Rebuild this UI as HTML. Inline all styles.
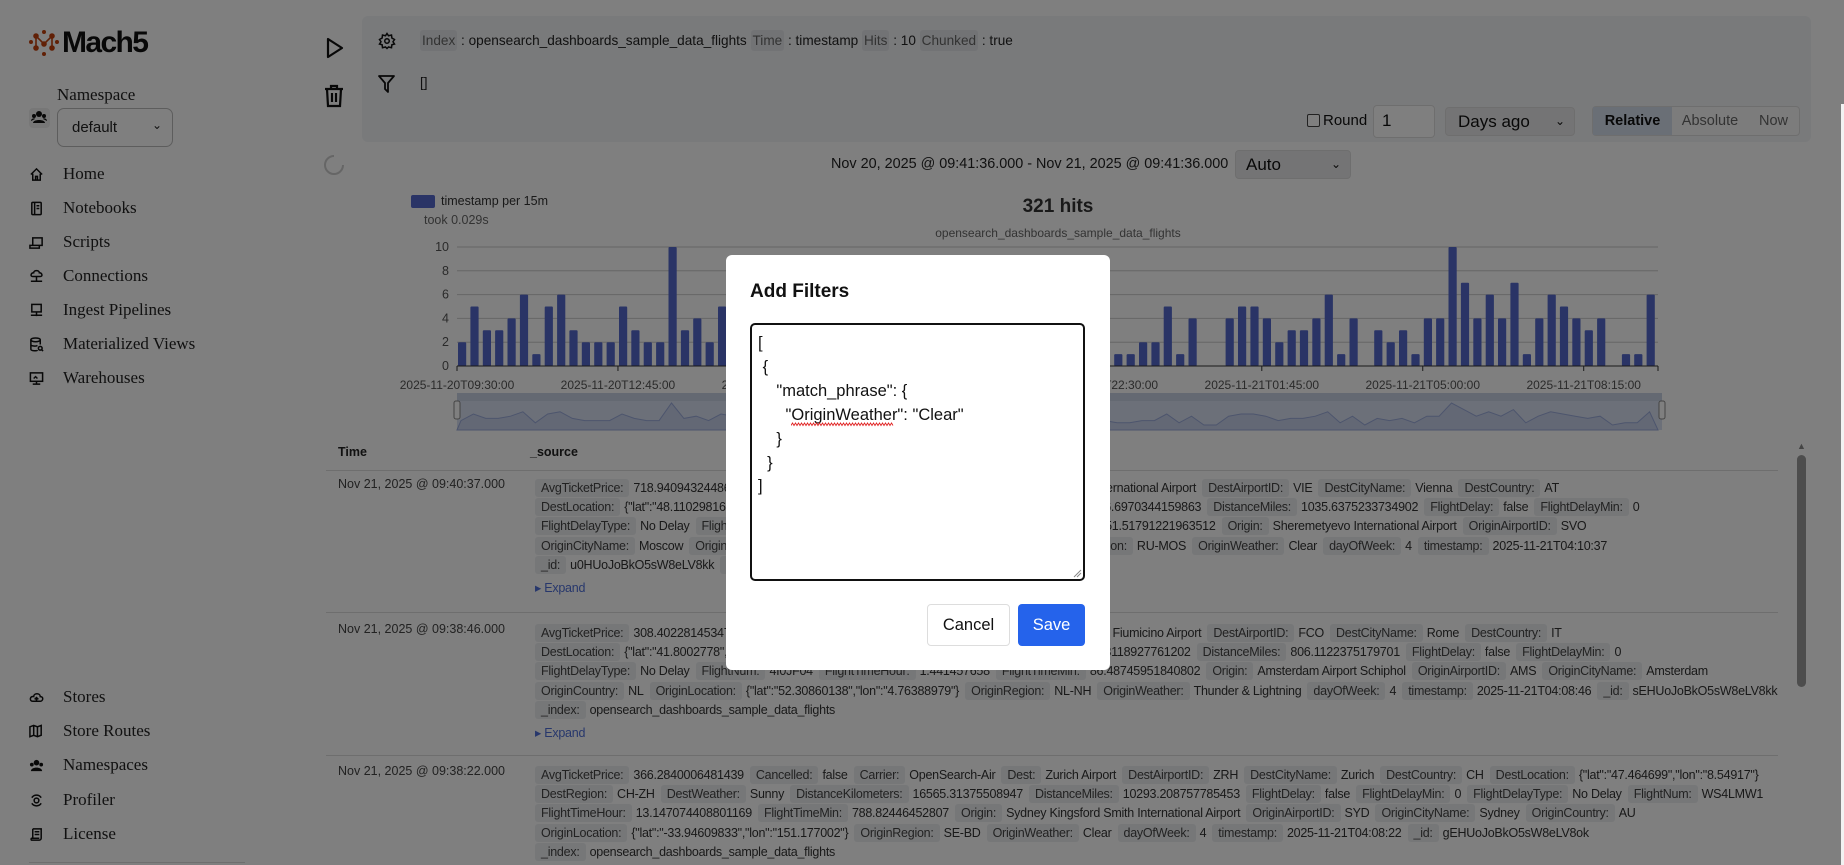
<!DOCTYPE html>
<html><head><meta charset="utf-8">
<style>
*{box-sizing:border-box;margin:0;padding:0}
html,body{width:1844px;height:865px;overflow:hidden;background:#fff;font-family:"Liberation Sans",sans-serif;color:#111}
.abs{position:absolute}
.nav{position:absolute;left:29px;font-family:"Liberation Serif",serif;font-size:17px;color:#222;display:flex;align-items:center;height:24px}
.nav svg{width:15px;height:15px;margin-right:19px;stroke:#111;fill:none;stroke-width:1.6}
.q{font-size:13.6px;color:#222;white-space:nowrap}
.q .l{background:#e5e7eb;color:#666;padding:3px 2px;border-radius:3px}
.row{position:absolute;left:535px;font-size:12.5px;letter-spacing:-0.25px;color:#333;white-space:nowrap}
.row div{height:19.2px;line-height:19.2px}
.k{background:#eceef1;color:#444;padding:2px 6px;border-radius:3px;margin-right:4px}
.v{margin-right:6px}
.time{position:absolute;left:338px;font-size:12.5px;color:#444}
.exp{font-size:12.5px;color:#4f6fd8;margin-top:5px;height:auto!important;line-height:16px!important}
.sep{position:absolute;left:326px;width:1452px;height:1px;background:#ddd}
</style></head><body>

<!-- Sidebar -->
<div class="abs" style="left:29px;top:26px;display:flex;align-items:center">
<svg width="30" height="26" viewBox="0 0 30 26"><g fill="#c2410c" stroke="#c2410c" stroke-width="1.6"><circle cx="2" cy="12" r="1.2"/><circle cx="28" cy="12" r="1.2"/><circle cx="15" cy="2" r="1.2"/><circle cx="15" cy="24" r="1.2"/><path d="M7 18 V6 L15 14 L23 6 V18" fill="none"/><circle cx="7" cy="6" r="2"/><circle cx="23" cy="6" r="2"/><circle cx="15" cy="14" r="2"/><circle cx="7" cy="18" r="2"/><circle cx="23" cy="18" r="2"/></g></svg>
<span style="font-weight:bold;font-size:30px;letter-spacing:-1.6px;color:#111;margin-left:3px">Mach5</span></div>
<div class="abs" style="left:29px;top:108px;width:21px;height:20px;background:#eee;border-radius:4px"></div>
<svg class="abs" style="left:31px;top:110px" width="16" height="14" viewBox="0 0 16 14"><g fill="#111"><circle cx="8" cy="4" r="3"/><circle cx="3" cy="6" r="2"/><circle cx="13" cy="6" r="2"/><path d="M2 13c0-4 12-4 12 0z"/><path d="M0 11c0-3 4-3 4-2zM16 11c0-3-4-3-4-2z"/></g></svg>
<div class="abs" style="left:57px;top:85px;font-family:'Liberation Serif',serif;font-size:17px;color:#222">Namespace</div>
<div class="abs" style="left:57px;top:108px;width:116px;height:39px;border:1px solid #bbb;border-radius:7px;font-size:15px;padding:10px 14px;color:#222">default<span style="position:absolute;right:10px;top:9px;font-size:12px">&#8964;</span></div>

<div class="nav" style="top:162px"><svg viewBox="0 0 16 16"><path d="M2 8 L8 2 L14 8 M4 7 V14 H12 V7 M7 14 V10 H9 V14"/></svg>Home</div>
<div class="nav" style="top:196px"><svg viewBox="0 0 16 16"><rect x="3" y="1.5" width="10" height="13" rx="1"/><path d="M6 1.5 V14.5 M8 5 H11 M8 8 H11"/></svg>Notebooks</div>
<div class="nav" style="top:230px"><svg viewBox="0 0 16 16"><path d="M4 3 H14 V11 H4 Z M1 11 H11 V14 H1 Z"/></svg>Scripts</div>
<div class="nav" style="top:264px"><svg viewBox="0 0 16 16"><path d="M4 8 C1 8 2 4 5 4 C5 1 11 1 11 4 C14 4 15 8 12 8 Z M8 8 V13 M2 13 H14"/></svg>Connections</div>
<div class="nav" style="top:298px"><svg viewBox="0 0 16 16"><rect x="3" y="1.5" width="10" height="8"/><path d="M8 9.5 V14 M2 13 H14"/></svg>Ingest Pipelines</div>
<div class="nav" style="top:332px"><svg viewBox="0 0 16 16"><ellipse cx="7" cy="3" rx="5" ry="2"/><path d="M2 3 V13 C2 15 9 15 9 14 M12 3 V8 M2 8 C2 10 8 10 9 9"/><circle cx="12" cy="12" r="2"/><path d="M13.5 13.5 L15 15"/></svg>Materialized Views</div>
<div class="nav" style="top:366px"><svg viewBox="0 0 16 16"><rect x="1.5" y="2" width="13" height="9"/><path d="M8 11 V14 M4 14 H12 M5 8 L7 6 L9 8"/></svg>Warehouses</div>

<div class="nav" style="top:685px"><svg viewBox="0 0 16 16"><path d="M4 12 C0 12 1 6 5 7 C5 3 12 3 12 7 C16 7 15 12 12 12 Z M8 12 V8 M6 10 L8 8 L10 10"/></svg>Stores</div>
<div class="nav" style="top:719px"><svg viewBox="0 0 16 16"><path d="M1 3 L5 1.5 L9 3 L13 1.5 V12 L9 13.5 L5 12 L1 13.5 Z M5 1.5 V12 M9 3 V13.5"/></svg>Store Routes</div>
<div class="nav" style="top:753px"><svg viewBox="0 0 16 16" style="fill:#111;stroke:none"><circle cx="8" cy="5" r="3"/><circle cx="3" cy="7" r="2"/><circle cx="13" cy="7" r="2"/><path d="M2 14c0-5 12-5 12 0z"/></svg>Namespaces</div>
<div class="nav" style="top:788px"><svg viewBox="0 0 16 16"><path d="M3 5 A6 6 0 0 1 13 5 M13 11 A6 6 0 0 1 3 11"/><circle cx="8" cy="8" r="2.5"/></svg>Profiler</div>
<div class="nav" style="top:822px"><svg viewBox="0 0 16 16"><path d="M4 2 H13 V12 C13 14 11 14 11 14 H3 C2 14 2 12 3 12 H11 M4 2 V12 M6 5 H11 M6 8 H11"/></svg>License</div>
<div class="abs" style="left:29px;top:862px;width:216px;height:1px;background:#ddd"></div>

<!-- Run / trash -->
<svg class="abs" style="left:325px;top:37px" width="20" height="22" viewBox="0 0 20 22"><path d="M3 2 L17 11 L3 20 Z" fill="none" stroke="#111" stroke-width="2.2" stroke-linejoin="round"/></svg>
<svg class="abs" style="left:324px;top:84px" width="20" height="24" viewBox="0 0 20 24"><g fill="none" stroke="#111" stroke-width="2.2"><path d="M1 5 H19 M7 5 V2 H13 V5 M3 5 L4 22 H16 L17 5 M8 9 V18 M12 9 V18"/></g></svg>
<svg class="abs" style="left:322px;top:153px" width="24" height="24" viewBox="0 0 24 24"><path d="M12 3 A9 9 0 1 0 21 12" fill="none" stroke="#ccc" stroke-width="2"/></svg>

<!-- Query panel -->
<div class="abs" style="left:362px;top:16px;width:1449px;height:126px;background:#f3f4f6;border-radius:6px"></div>
<svg class="abs" style="left:378px;top:32px" width="18" height="18" viewBox="0 0 24 24"><g fill="none" stroke="#111" stroke-width="2"><circle cx="12" cy="12" r="3"/><path d="M12 2 L14 5 L18 4 L18.5 8 L22 10 L20 13 L22 16 L18.5 17 L18 21 L14 20 L12 22 L10 20 L6 21 L5.5 17 L2 16 L4 13 L2 10 L5.5 8 L6 4 L10 5 Z"/></g></svg>
<svg class="abs" style="left:378px;top:75px" width="17" height="18" viewBox="0 0 17 18"><path d="M1 1 H16 L10 8 V17 L7 14 V8 Z" fill="none" stroke="#111" stroke-width="1.8" stroke-linejoin="round"/></svg>
<div class="abs q" style="left:420px;top:33px"><span class="l">Index</span> : opensearch_dashboards_sample_data_flights <span class="l">Time</span> : timestamp <span class="l">Hits</span> : 10 <span class="l">Chunked</span> : true</div>
<div class="abs q" style="left:420px;top:75px">[]</div>

<div class="abs" style="left:1307px;top:114px;width:13px;height:13px;border:1px solid #444;border-radius:2px;background:#fff"></div>
<div class="abs" style="left:1323px;top:112px;font-size:15px;color:#111">Round</div>
<div class="abs" style="left:1373px;top:105px;width:62px;height:33px;border:1px solid #ddd;border-radius:4px;background:#fff;font-size:17px;padding:5px 8px">1</div>
<div class="abs" style="left:1445px;top:107px;width:130px;height:29px;border:1px solid #ddd;border-radius:4px;background:#e9e9ea;font-size:17px;padding:4px 12px">Days ago<span style="position:absolute;right:9px;top:6px;font-size:12px">&#8964;</span></div>
<div class="abs" style="left:1592px;top:106px;width:208px;height:30px;border:1px solid #ddd;border-radius:4px;background:#f8f8f8;display:flex;font-size:14.5px;align-items:center">
<div style="background:#d5deec;height:100%;width:79px;display:flex;align-items:center;justify-content:center;font-weight:bold">Relative</div>
<div style="width:76px;text-align:center;color:#666">Absolute</div><div style="width:51px;text-align:center;color:#666">Now</div></div>

<div class="abs" style="left:831px;top:156px;font-size:14.4px;color:#222">Nov 20, 2025 @ 09:41:36.000 - Nov 21, 2025 @ 09:41:36.000</div>
<div class="abs" style="left:1235px;top:150px;width:116px;height:29px;border:1px solid #ddd;border-radius:4px;background:#e9e9ea;font-size:17px;padding:4px 10px">Auto<span style="position:absolute;right:9px;top:6px;font-size:12px">&#8964;</span></div>

<!-- Chart -->
<div class="abs" style="left:411px;top:195px;width:24px;height:13px;background:#5468cc;border-radius:2px"></div>
<div class="abs" style="left:441px;top:194px;font-size:12.5px;color:#333">timestamp per 15m</div>
<div class="abs" style="left:424px;top:213px;font-size:12.5px;color:#666">took 0.029s</div>
<div class="abs" style="left:958px;top:196px;width:200px;text-align:center;font-size:19px;font-weight:bold;color:#333">321 hits</div>
<div class="abs" style="left:858px;top:226px;width:400px;text-align:center;font-size:12px;color:#666">opensearch_dashboards_sample_data_flights</div>
<svg class="abs" id="ch" style="left:0;top:0" width="1844" height="440"></svg>

<!-- Table -->
<div class="abs" style="left:338px;top:445px;font-size:12.5px;font-weight:bold;color:#222">Time</div>
<div class="abs" style="left:530px;top:445px;font-size:12.5px;font-weight:bold;color:#222">_source</div>
<div class="sep" style="top:470px"></div>
<div class="time" style="top:477px">Nov 21, 2025 @ 09:40:37.000</div>
<div class="row" style="top:479px">
<div><span class="k">AvgTicketPrice:</span><span class="v">718.9409432448638</span><span class="k">Cancelled:</span><span class="v">false</span><span class="k">Carrier:</span><span class="v">Logstash Airways</span><span class="k">Dest:</span><span class="v">Vienna International Airport</span><span class="k">DestAirportID:</span><span class="v">VIE</span><span class="k">DestCityName:</span><span class="v">Vienna</span><span class="k">DestCountry:</span><span class="v">AT</span></div>
<div><span class="k">DestLocation:</span><span class="v">{"lat":"48.11029816","lon":"16.56970024"}</span><span class="k">DestRegion:</span><span class="v">AT-9</span><span class="k">DistanceKilometers:</span><span class="v">1666.6970344159863</span><span class="k">DistanceMiles:</span><span class="v">1035.6375233734902</span><span class="k">FlightDelay:</span><span class="v">false</span><span class="k">FlightDelayMin:</span><span class="v">0</span></div>
<div><span class="k">FlightDelayType:</span><span class="v">No Delay</span><span class="k">FlightNum:</span><span class="v">9HY9SWR</span><span class="k">FlightTimeHour:</span><span class="v">2.52529870</span><span class="k">FlightTimeMin:</span><span class="v">151.51791221963512</span><span class="k">Origin:</span><span class="v">Sheremetyevo International Airport</span><span class="k">OriginAirportID:</span><span class="v">SVO</span></div>
<div><span class="k">OriginCityName:</span><span class="v">Moscow</span><span class="k">OriginCountry:</span><span class="v">RU</span><span class="k">OriginLocation:</span><span class="v">{"lat":"55.97","lon":"37.41"}</span><span class="k">OriginRegion:</span><span class="v">RU-MOS</span><span class="k">OriginWeather:</span><span class="v">Clear</span><span class="k">dayOfWeek:</span><span class="v">4</span><span class="k">timestamp:</span><span class="v">2025-11-21T04:10:37</span></div>
<div><span class="k">_id:</span><span class="v">u0HUoJoBkO5sW8eLV8kk</span><span class="k">_index:</span><span class="v">opensearch_dashboards_sample_data_flights</span></div>
<div class="exp">&#9656; Expand</div>
</div>
<div class="sep" style="top:612px"></div>
<div class="time" style="top:622px">Nov 21, 2025 @ 09:38:46.000</div>
<div class="row" style="top:624px">
<div><span class="k">AvgTicketPrice:</span><span class="v">308.4022814534701</span><span class="k">Cancelled:</span><span class="v">false</span><span class="k">Carrier:</span><span class="v">JetBeats</span><span class="k">Dest:</span><span class="v">Leonardo da Vinci - Fiumicino Airport</span><span class="k">DestAirportID:</span><span class="v">FCO</span><span class="k">DestCityName:</span><span class="v">Rome</span><span class="k">DestCountry:</span><span class="v">IT</span></div>
<div><span class="k">DestLocation:</span><span class="v">{"lat":"41.8002778","lon":"12.2388889"}</span><span class="k">DestRegion:</span><span class="v">IT-62</span><span class="k">DistanceKilometers:</span><span class="v">1297.3118927761202</span><span class="k">DistanceMiles:</span><span class="v">806.1122375179701</span><span class="k">FlightDelay:</span><span class="v">false</span><span class="k">FlightDelayMin:</span><span class="v">0</span></div>
<div><span class="k">FlightDelayType:</span><span class="v">No Delay</span><span class="k">FlightNum:</span><span class="v">4I0JF04</span><span class="k">FlightTimeHour:</span><span class="v">1.441457658</span><span class="k">FlightTimeMin:</span><span class="v">86.48745951840802</span><span class="k">Origin:</span><span class="v">Amsterdam Airport Schiphol</span><span class="k">OriginAirportID:</span><span class="v">AMS</span><span class="k">OriginCityName:</span><span class="v">Amsterdam</span></div>
<div><span class="k">OriginCountry:</span><span class="v">NL</span><span class="k">OriginLocation:</span><span class="v">{"lat":"52.30860138","lon":"4.76388979"}</span><span class="k">OriginRegion:</span><span class="v">NL-NH</span><span class="k">OriginWeather:</span><span class="v">Thunder &amp; Lightning</span><span class="k">dayOfWeek:</span><span class="v">4</span><span class="k">timestamp:</span><span class="v">2025-11-21T04:08:46</span><span class="k">_id:</span><span class="v">sEHUoJoBkO5sW8eLV8kk</span></div>
<div><span class="k">_index:</span><span class="v">opensearch_dashboards_sample_data_flights</span></div>
<div class="exp">&#9656; Expand</div>
</div>
<div class="sep" style="top:755px"></div>
<div class="time" style="top:764px">Nov 21, 2025 @ 09:38:22.000</div>
<div class="row" style="top:766px">
<div><span class="k">AvgTicketPrice:</span><span class="v">366.2840006481439</span><span class="k">Cancelled:</span><span class="v">false</span><span class="k">Carrier:</span><span class="v">OpenSearch-Air</span><span class="k">Dest:</span><span class="v">Zurich Airport</span><span class="k">DestAirportID:</span><span class="v">ZRH</span><span class="k">DestCityName:</span><span class="v">Zurich</span><span class="k">DestCountry:</span><span class="v">CH</span><span class="k">DestLocation:</span><span class="v">{"lat":"47.464699","lon":"8.54917"}</span></div>
<div><span class="k">DestRegion:</span><span class="v">CH-ZH</span><span class="k">DestWeather:</span><span class="v">Sunny</span><span class="k">DistanceKilometers:</span><span class="v">16565.31375508947</span><span class="k">DistanceMiles:</span><span class="v">10293.208757785453</span><span class="k">FlightDelay:</span><span class="v">false</span><span class="k">FlightDelayMin:</span><span class="v">0</span><span class="k">FlightDelayType:</span><span class="v">No Delay</span><span class="k">FlightNum:</span><span class="v">WS4LMW1</span></div>
<div><span class="k">FlightTimeHour:</span><span class="v">13.147074408801169</span><span class="k">FlightTimeMin:</span><span class="v">788.82446452807</span><span class="k">Origin:</span><span class="v">Sydney Kingsford Smith International Airport</span><span class="k">OriginAirportID:</span><span class="v">SYD</span><span class="k">OriginCityName:</span><span class="v">Sydney</span><span class="k">OriginCountry:</span><span class="v">AU</span></div>
<div><span class="k">OriginLocation:</span><span class="v">{"lat":"-33.94609833","lon":"151.177002"}</span><span class="k">OriginRegion:</span><span class="v">SE-BD</span><span class="k">OriginWeather:</span><span class="v">Clear</span><span class="k">dayOfWeek:</span><span class="v">4</span><span class="k">timestamp:</span><span class="v">2025-11-21T04:08:22</span><span class="k">_id:</span><span class="v">gEHUoJoBkO5sW8eLV8ok</span></div>
<div><span class="k">_index:</span><span class="v">opensearch_dashboards_sample_data_flights</span></div>
</div>
<div class="abs" style="left:1797px;top:441px;font-size:9px;color:#888">&#9650;</div>
<div class="abs" style="left:1797px;top:455px;width:9px;height:232px;background:#9a9a9a;border-radius:5px"></div>

<!-- overlay -->
<div class="abs" style="left:0;top:0;width:1844px;height:865px;background:rgba(0,0,0,0.5)"></div>
<div class="abs" style="left:1841px;top:104px;width:3px;height:761px;background:#f2f2f2"></div>

<!-- Modal -->
<div class="abs" style="left:726px;top:255px;width:384px;height:415px;background:#fff;border-radius:6px"></div>
<div class="abs" style="left:750px;top:281px;font-size:19px;font-weight:bold;color:#111">Add Filters</div>
<div class="abs" style="left:750px;top:323px;width:335px;height:258px;border:2px solid #111;border-radius:5px"></div>
<pre class="abs" style="left:758px;top:332px;font-family:'Liberation Sans',sans-serif;font-size:16.5px;line-height:23.9px;color:#111">[
 {
    "match_phrase": {
      "OriginWeather": "Clear"
    }
  }
]</pre>
<svg class="abs" style="left:791px;top:422px" width="104" height="5" viewBox="0 0 104 5"><path d="M0 3.5 L1.5 1 L3 3.5 L4.5 1 L6 3.5 L7.5 1 L9 3.5 L10.5 1 L12 3.5 L13.5 1 L15 3.5 L16.5 1 L18 3.5 L19.5 1 L21 3.5 L22.5 1 L24 3.5 L25.5 1 L27 3.5 L28.5 1 L30 3.5 L31.5 1 L33 3.5 L34.5 1 L36 3.5 L37.5 1 L39 3.5 L40.5 1 L42 3.5 L43.5 1 L45 3.5 L46.5 1 L48 3.5 L49.5 1 L51 3.5 L52.5 1 L54 3.5 L55.5 1 L57 3.5 L58.5 1 L60 3.5 L61.5 1 L63 3.5 L64.5 1 L66 3.5 L67.5 1 L69 3.5 L70.5 1 L72 3.5 L73.5 1 L75 3.5 L76.5 1 L78 3.5 L79.5 1 L81 3.5 L82.5 1 L84 3.5 L85.5 1 L87 3.5 L88.5 1 L90 3.5 L91.5 1 L93 3.5 L94.5 1 L96 3.5 L97.5 1 L99 3.5 L100.5 1 L102 3.5" fill="none" stroke="#e02020" stroke-width="0.9"/></svg>
<svg class="abs" style="left:1072px;top:568px" width="10" height="10"><path d="M2 9 L9 2 M5 9 L9 5" stroke="#888" stroke-width="1"/></svg>
<div class="abs" style="left:927px;top:604px;width:83px;height:42px;border:1px solid #ddd;border-radius:4px;font-size:16.5px;display:flex;align-items:center;justify-content:center;color:#111">Cancel</div>
<div class="abs" style="left:1018px;top:604px;width:67px;height:42px;background:#2563eb;border-radius:4px;font-size:16.5px;display:flex;align-items:center;justify-content:center;color:#fff">Save</div>

<script>
var v=[2,5,3,3,4,6,1,5,6,3,2,2,2,5,3,2,2,10,3,4,2,5,
4,3,2,6,3,5,2,4,3,3,2,5,4,3,6,2,3,4,3,2,5,3,4,2,3,1,2,3,4,2,
2,1,1,2,2,5,1,4,0,0,4,5,5,4,2,3,3,4,6,1,4,0,3,2,3,1,4,4,10,7,4,6,4,7,1,4,6,5,4,3,4,0,1,1,6];
var x0=457,x1=1658,y0=366,yu=11.9,bw=(x1-x0)/97,s='';
for(var g=0;g<=10;g+=2){var y=y0-g*yu;s+='<line x1="'+x0+'" x2="'+x1+'" y1="'+y+'" y2="'+y+'" stroke="#ccc"/>';
s+='<text x="'+(x0-8)+'" y="'+(y+4)+'" text-anchor="end" font-size="12.5" fill="#555" font-family="Liberation Sans">'+g+'</text>';}
for(var i=0;i<v.length;i++){if(v[i]>0){var h=v[i]*yu;s+='<rect x="'+(x0+1+i*bw).toFixed(1)+'" y="'+(y0-h).toFixed(1)+'" width="8.2" height="'+h.toFixed(1)+'" fill="#5468cc" rx="1"/>';}}
s+='<line x1="'+x0+'" x2="'+x1+'" y1="'+y0+'" y2="'+y0+'" stroke="#333"/>';
var lab=['2025-11-20T09:30:00','2025-11-20T12:45:00','2025-11-20T16:00:00','2025-11-20T19:15:00','2025-11-20T22:30:00','2025-11-21T01:45:00','2025-11-21T05:00:00','2025-11-21T08:15:00'];
for(var k=0;k<8;k++){var x=x0+13*k*bw;s+='<line x1="'+x+'" x2="'+x+'" y1="'+y0+'" y2="'+(y0+5)+'" stroke="#333"/>';
s+='<text x="'+x+'" y="'+(y0+23)+'" text-anchor="middle" font-size="12" fill="#555" font-family="Liberation Sans">'+lab[k]+'</text>';}
s+='<line x1="'+x1+'" x2="'+x1+'" y1="'+y0+'" y2="'+(y0+5)+'" stroke="#333"/>';
s+='<rect x="'+x0+'" y="393" width="'+(x1-x0+4)+'" height="37" fill="#d9e1f2"/><rect x="'+x0+'" y="393" width="'+(x1-x0+4)+'" height="8" fill="#c9d2e4"/>';
var p='M'+x0+' 430';for(i=0;i<v.length;i++){p+=' L'+(x0+i*bw+4).toFixed(1)+' '+(425-v[i]*2.2).toFixed(1);}p+=' L'+x1+' 430 Z';
s+='<path d="'+p+'" fill="#c6d0ea" stroke="#9aaada" stroke-width="1"/>';
s+='<rect x="'+(x0-3)+'" y="401" width="6" height="18" rx="2" fill="#fff" stroke="#888"/><rect x="'+(x1+1)+'" y="401" width="6" height="18" rx="2" fill="#fff" stroke="#888"/>';
document.getElementById('ch').innerHTML=s;
</script>
</body></html>
